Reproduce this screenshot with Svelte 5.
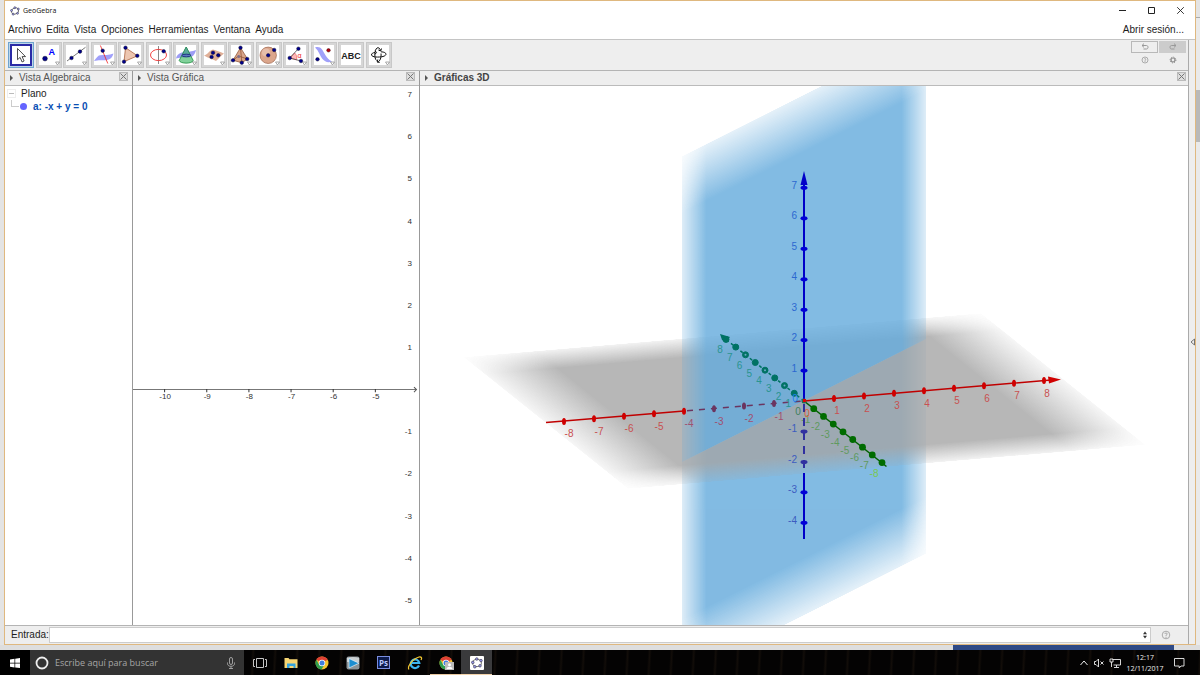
<script>
  const menus = ['Archivo', 'Edita', 'Vista', 'Opciones', 'Herramientas', 'Ventana', 'Ayuda'];
  const tools = ['Mueve', 'Punto', 'Recta', 'Perpendicular', 'Polígono', 'Circunferencia', 'Intersección', 'Plano',
    'Pirámide', 'Esfera', 'Ángulo', 'Simetría', 'Texto', 'Rota vista'];
  const apps = ['Vista de tareas', 'Explorador', 'Chrome', 'Reproductor', 'Photoshop', 'Explorer', 'Chrome perfil', 'GeoGebra'];

  let active = $state('Mueve');
  let command = $state('');
  let search = $state('');

  const range = (a, b) => Array.from({ length: b - a + 1 }, (_, i) => a + i);

  // 2D view
  const xTicks = range(-10, -5).map((n) => ({ n, x: 586 + 42 * n }));
  const yTicks = range(-5, 7).filter((n) => n !== 0).map((n) => ({ n, y: 389 - 42 * n }));

  // 3D view, parallel projection around the origin
  const O = { x: 804, y: 401 };
  const at = (n, dx, dy) => ({ n, x: O.x + dx * n, y: O.y + dy * n });
  const xAxis = range(-8, 8).filter((n) => n !== 0).map((n) => at(n, 30, -2.55));
  const yAxis = range(-8, 8).filter((n) => n !== 0).map((n) => at(n, -9.75, -7.7));
  const zAxis = range(-4, 7).filter((n) => n !== 0).map((n) => at(n, 0, -30.45));

  // edge fades of the planes: direction, width of the fade, opacity left at the edge
  const fades = [
    { id: 'blueU', x2: 1, y2: 0, w: 0.1, edge: 0.26 },
    { id: 'blueV', x2: 0, y2: 1, w: 0.11, edge: 0.2 },
    { id: 'greyU', x2: 1, y2: 0, w: 0.14, edge: 0.12 },
    { id: 'greyV', x2: 0, y2: 1, w: 0.13, edge: 0.16 }
  ];
</script>

{#snippet logo(size)}
  <svg width={size} height={size} viewBox="0 0 12 12">
    <ellipse cx="6" cy="6" rx="4.4" ry="3.6" transform="rotate(-20 6 6)" fill="none" stroke="#666" />
    {#each [[1.8, 5.4], [5.8, 2], [10, 3.6], [9, 8.8], [3.8, 9.8]] as [x, y]}
      <circle cx={x} cy={y} r="1.2" fill="#9a9aee" stroke="#334" stroke-width=".6" />
    {/each}
  </svg>
{/snippet}

{#snippet dots(list)}
  {#each list as [x, y]}<circle cx={x} cy={y} r="1.8" fill="#00008c" stroke="#001" stroke-width=".4" />{/each}
{/snippet}

{#snippet toolIcon(name)}
  <svg width="22" height="22" viewBox="0 0 22 22">
    {#if name === 'Mueve'}
      <path d="M7.5 4.5v11.2l2.6-2.3 2 4.6 2-1-2-4.4h3.4z" fill="#fff" stroke="#222" stroke-width=".8" />
    {:else if name === 'Punto'}
      <circle cx="7" cy="14.6" r="2.4" fill="#00008c" stroke="#001" stroke-width=".4" />
      <text x="10.5" y="11" font-size="9" font-weight="bold" fill="#00f">A</text>
    {:else if name === 'Recta'}
      <path d="M2 17 20.5 3.3" stroke="#555" stroke-width=".8" />
      {@render dots([[6.5, 14], [15, 7.6]])}
    {:else if name === 'Perpendicular'}
      <path d="M1 17c2-3 4-5.500 6-5.800 4-.5 9 .3 13.500-1.700-1 3.500-3 6-6.500 6.500-4 .5-9-.5-13 1z" fill="#a0a0fa" />
      <path d="m7.400 1.500 7.400 18" stroke="#f02020" stroke-width=".8" />
      {@render dots([[9.700, 6.700]])}
    {:else if name === 'Polígono'}
      <path d="M5.500 3.700 17.500 11.800 4 17.700z" fill="#edc6b0" stroke="#a0522d" stroke-width=".7" />
      {@render dots([[5.500, 3.700], [17.300, 11.800], [4, 17.700]])}
    {:else if name === 'Circunferencia'}
      <path d="M10.500 2v18" stroke="#888" />
      <ellipse cx="10.500" cy="11" rx="8" ry="5.600" fill="none" stroke="#f03030" stroke-width=".9" />
      <path d="M10.500 9v5" stroke="#888" />
      {@render dots([[15.700, 7.300]])}
    {:else if name === 'Intersección'}
      <path d="M1 14.500c1-4 4-6 8-6.500s8 0 12-2c-1 5-4 7.500-8 8s-8-1-12 .5z" fill="#9c9cf5" />
      <path d="M11.200 3 4.200 16.500c1 3.500 13 3.500 14 0z" fill="#6cc98a" fill-opacity=".85" stroke="#178a3a" stroke-width=".8" />
      <path d="M11.200 3 7.500 10.500h7.500z" fill="#58a89a" stroke="#208050" stroke-width=".5" />
      <ellipse cx="11.300" cy="11.500" rx="4.500" ry="1.300" fill="#5a7ac0" stroke="#1a2a80" stroke-width=".9" />
    {:else if name === 'Plano'}
      <path d="M1 11.500c4-1 5-5 9-6 3 1 7 2 11 4-3 2-5 5-8 7.500-3-2-8-3-12-5.500z" fill="#e0b098" />
      {@render dots([[10, 8.700], [15.300, 11.300], [8.600, 13]])}
    {:else if name === 'Pirámide'}
      <path d="M10.500 3.700 3 16.300l8.800 2.400L17.500 15z" fill="#d9a58a" stroke="#8a4a2a" stroke-width=".7" />
      <path d="m10.500 3.700 1.300 15M3 16.300 8.500 12l9 3" fill="none" stroke="#8a4a2a" stroke-width=".7" />
      {@render dots([[10.500, 3.700], [3, 16.300], [11.800, 18.700], [17.200, 15]])}
      <circle cx="8.700" cy="12.500" r="1.500" fill="#80708c" />
    {:else if name === 'Esfera'}
      <circle cx="10.200" cy="11.300" r="8.200" fill="#dba68c" stroke="#9c6248" stroke-width=".7" />
      <circle cx="8" cy="8.500" r="4" fill="#edc9b6" opacity=".7" />
      {@render dots([[10.200, 11.300], [16.200, 6]])}
    {:else if name === 'Ángulo'}
      <path d="m4.700 14 5-5c2 2 2.500 4.500 1.800 6.800z" fill="#ffb8b8" stroke="#e33" stroke-width=".5" />
      <path d="M13.400 4.700 4.700 14 16 17" fill="none" stroke="#444" stroke-width=".8" />
      <text x="12.500" y="13.500" font-size="7" fill="#e22">α</text>
      {@render dots([[4.700, 14], [13.400, 4.700], [16, 17]])}
    {:else if name === 'Simetría'}
      <path d="M2 3.500c3-1 5-.5 7 2s4 9 10 12c-4 1.500-7 .5-9.500-2.500S6 7 2 3.500z" fill="#a0a0fa" />
      <circle cx="15.500" cy="6.300" r="1.800" fill="#b00010" stroke="#300" stroke-width=".4" />
      {@render dots([[4.500, 15.300]])}
    {:else if name === 'Texto'}
      <text x="11" y="14.500" font-size="9" font-weight="bold" text-anchor="middle" fill="#222">ABC</text>
    {:else}
      <path d="M8.500 16.500c-2.500-2-2-11 .5-12.500 1.500-1 3 .5 3.500 2.500M13 9.500c.5 4-1 8-3.500 8.500M13 7.800c6 .2 6.500 3.500 2 4.700-4.500 1-11 .8-11.500-1.500C3.300 9.500 5 8.700 7 8.500M13.500 4.500l-.8 2.500-2.300-1M7 6.800l1.500 1.600-1.500 2M9.800 15.500l-.6 2.500 2.500.4" fill="none" stroke="#111" />
    {/if}
    {#if name !== 'Mueve' && name !== 'Texto'}
      <path d="M17.500 18h4l-2 3z" fill="#fff" stroke="#888" stroke-width=".7" />
    {/if}
  </svg>
{/snippet}

{#snippet chrome()}
  <circle cx="8" cy="8" r="6.500" fill="#f4c430" />
  <path d="M8 8 2.400 4.700A6.500 6.500 0 0 1 13.600 4.700z" fill="#df4033" />
  <path d="M2.400 4.700A6.500 6.500 0 0 0 7.500 14.500L10.500 9.500 5 9.500z" fill="#2f9e4f" />
  <circle cx="8" cy="8" r="3.200" fill="#fff" />
  <circle cx="8" cy="8" r="2.500" fill="#3f7fe0" />
{/snippet}

{#snippet appIcon(name)}
  <svg width="16" height="16" viewBox="0 0 16 16">
    {#if name === 'Vista de tareas'}
      <path d="M4.500 3.500h7v9h-7zM3 4.500H1.500v7H3M13 4.500h1.500v7H13" fill="none" stroke="#ddd" stroke-width=".9" />
    {:else if name === 'Explorador'}
      <path d="M1.500 3h4l1 1.200h8V13h-13z" fill="#f7d673" />
      <path d="M4 13V8.500h8.500V13h-2v-2h-4v2z" fill="#35a3de" />
    {:else if name === 'Chrome'}
      {@render chrome()}
    {:else if name === 'Reproductor'}
      <rect x="1.500" y="1.500" width="13" height="13" rx="2" fill="#8c9498" />
      <path d="M2 3c4-1.500 8-1.500 12 0v4H2z" fill="#c9cfd2" />
      <path d="m4 3.500 10 4.700L4 13z" fill="#1d8ed0" stroke="#e6f3fa" stroke-width=".7" />
    {:else if name === 'Photoshop'}
      <rect x="1.500" y="1.500" width="12" height="12" fill="#0c1a4a" stroke="#7a8ee0" />
      <text x="7.500" y="10.500" font-size="8" font-weight="bold" text-anchor="middle" fill="#b8c8ff">Ps</text>
    {:else if name === 'Explorer'}
      <path d="M12 10.500A4.300 4.300 0 1 1 12.300 8H4.500" fill="none" stroke="#3cb5f0" stroke-width="2.200" />
      <path d="M2 14.500C0 12 5 4 12 2c3-.5 3 1.500 2 3" fill="none" stroke="#f3c832" stroke-width="1.200" />
    {:else if name === 'Chrome perfil'}
      {@render chrome()}
      <rect x="7" y="7" width="9" height="8" fill="#bbb" />
      <circle cx="11.500" cy="9.800" r="1.500" fill="#fff" />
      <path d="M8.500 14c.5-3 5.500-3 6 0z" fill="#fff" />
    {:else}
      <rect x="1" y="1" width="14" height="14" rx="1" fill="#fff" />
      <g transform="translate(2 2)">
        <ellipse cx="6" cy="6" rx="4.400" ry="3.600" fill="none" stroke="#555" stroke-width=".8" />
        {#each [[1.800, 5.400], [5.800, 2], [10, 3.600], [9, 8.800], [3.800, 9.800]] as [x, y]}
          <circle cx={x} cy={y} r="1.300" fill="#9a9aee" stroke="#334" stroke-width=".6" />
        {/each}
      </g>
    {/if}
  </svg>
{/snippet}

{#snippet close()}
  <button class="close" aria-label="Cerrar vista">
    <svg width="9" height="9" viewBox="0 0 9 9"><path d="m1.500 1.500 6 6m0-6-6 6" stroke="#777" /></svg>
  </button>
{/snippet}

<div class="desktop">
  <div class="behind"><span class="thumb"></span></div>
  <div class="window">
    <header class="title">
      {@render logo(10)}
      <span class="name">GeoGebra</span>
      <div class="controls">
        <button aria-label="Minimizar"><svg width="9" height="9"><path d="M1 4.500h7" stroke="#222" /></svg></button>
        <button aria-label="Maximizar"><svg width="9" height="9"><path d="M1.500 1.500h6v6h-6z" fill="none" stroke="#222" /></svg></button>
        <button aria-label="Cerrar"><svg width="9" height="9"><path d="m1.200 1.200 6.600 6.600m0-6.600L1.200 7.800" stroke="#222" stroke-width=".9" /></svg></button>
      </div>
    </header>

    <nav class="menu">
      {#each menus as m (m)}<button>{m}</button>{/each}
      <button class="login">Abrir sesión...</button>
    </nav>

    <div class="main">
      <div class="work">
        <div class="toolbar">
          <div class="tools">
            {#each tools as t (t)}
              <button class="tool" class:on={active === t} aria-label={t} onclick={() => (active = t)}>{@render toolIcon(t)}</button>
            {/each}
          </div>
          <div class="side">
            <button class="undo" aria-label="Deshace"><svg width="8" height="8"><path d="M1 2.500h4.500C7.500 2.500 7.500 6 5.500 6H2.500M3 .6 1 2.500 3 4.400" fill="none" stroke="#999" /></svg></button>
            <button class="undo redo" aria-label="Rehace"><svg width="8" height="8"><path d="M7 2.500H2.500C.5 2.500.5 6 2.500 6h3M5 .6l2 1.900-2 1.900" fill="none" stroke="#999" /></svg></button>
            <button aria-label="Ayuda"><svg width="8" height="8"><circle cx="4" cy="4" r="3" fill="none" stroke="#999" stroke-width=".8" /><path d="M3 3.200c.3-1 2-.8 2 .2L4 4.300V6" fill="none" stroke="#999" stroke-width=".7" /></svg></button>
            <button aria-label="Preferencias"><svg width="8" height="8"><circle cx="4" cy="4" r="2" fill="none" stroke="#888" stroke-width="1.200" /><circle cx="4" cy="4" r="2.900" fill="none" stroke="#888" stroke-dasharray="1.100 1.180" /></svg></button>
          </div>
        </div>

        <div class="views">
          <section class="pane">
            <div class="head"><i class="arrow"></i><span>Vista Algebraica</span>{@render close()}</div>
            <div class="tree">
              <div class="group"><button class="fold" aria-label="Contraer"></button>Plano</div>
              <div class="item"><span class="branch"></span><span class="ball"></span>a: -x + y = 0</div>
            </div>
          </section>

          <section class="pane">
            <div class="head"><i class="arrow"></i><span>Vista Gráfica</span>{@render close()}</div>
            <svg class="canvas" viewBox="134 86 285 539" preserveAspectRatio="xMaxYMid slice">
              <path d="M133 389.500h283" stroke="#777" />
              <path d="m414 387 2.500 2.500L414 392" fill="none" stroke="#555" />
              {#each xTicks as t (t.n)}
                <path d="M{t.x - 0.5} 389v3" stroke="#333" />
                <text class="small" x={t.x} y="399" text-anchor="middle">{t.n}</text>
              {/each}
              {#each yTicks as t (t.n)}
                <text class="small" x="412" y={t.y + 3} text-anchor="end">{t.n}</text>
              {/each}
            </svg>
          </section>

          <section class="pane">
            <div class="head bold"><i class="arrow"></i><span>Gráficas 3D</span>{@render close()}</div>
            <svg class="canvas" viewBox="420 86 768 539" preserveAspectRatio="xMidYMid slice">
              <defs>
                {#each fades as f (f.id)}
                  <linearGradient id="{f.id}Fade" x2={f.x2} y2={f.y2}>
                    <stop offset="0" stop-color="#fff" stop-opacity={f.edge} />
                    <stop offset={f.w} stop-color="#fff" />
                    <stop offset={1 - f.w} stop-color="#fff" />
                    <stop offset="1" stop-color="#fff" stop-opacity={f.edge} />
                  </linearGradient>
                  <mask id={f.id} maskUnits="userSpaceOnUse" x="0" y="0" width="100" height="100">
                    <rect width="100" height="100" fill="url(#{f.id}Fade)" />
                  </mask>
                {/each}
                <!-- halves of the vertical plane, split where z = 0 -->
                <clipPath id="above"><path d="M680 0h250v337L680 463z" /></clipPath>
                <clipPath id="below"><path d="M680 463 930 337v400H680z" /></clipPath>
              </defs>

              {#snippet plane(name, matrix, fill, opacity)}
                <g transform={matrix} {opacity}>
                  <g mask="url(#{name}U)"><rect width="100" height="100" {fill} mask="url(#{name}V)" /></g>
                </g>
              {/snippet}

              <g clip-path="url(#below)">{@render plane('blue', 'matrix(2.44 -1.23 0 5.21 682 156)', '#63aadc', 0.8)}</g>
              {@render plane('grey', 'matrix(5.18 -.44 1.65 1.32 463 357)', '#a5a5a5', 0.79)}
              <g clip-path="url(#above)">{@render plane('blue', 'matrix(2.44 -1.23 0 5.21 682 156)', '#63aadc', 0.8)}</g>

              <!-- x axis, dashed where the plane hides it -->
              <path d="M546 422.500 684 411M804 401l250-21.200" stroke="#c00000" stroke-width="1.500" />
              <path d="M684 411 804 401" stroke="#6b3560" stroke-width="1.500" stroke-dasharray="6 6" stroke-dashoffset="-3" />
              <path d="m1061 379.500-13-3 1 7z" fill="#d00000" />
              {#each xAxis as t (t.n)}
                <ellipse cx={t.x} cy={t.y} rx="2" ry="3.500" fill={t.n < 0 && t.n > -4 ? '#6b3560' : '#cf0000'} />
                <text x={t.x + (t.n < 0 ? 5 : 3)} y={t.y + 16} text-anchor="middle" fill={t.n < 0 && t.n > -5 ? '#a05070' : '#c85050'}>{t.n}</text>
              {/each}

              <!-- y axis -->
              <path d="M804 401 726 339.500" stroke="#007264" stroke-width="1.500" stroke-dasharray="3 3" />
              <path d="m804 401 82.500 65.500" stroke="#006000" stroke-width="1.500" />
              <path d="m720 334 2 6 4 2 4-5z" fill="#007264" />
              {#each yAxis as t (t.n)}
                <circle cx={t.x} cy={t.y} r={t.n > 0 ? 3 : 3.4} fill={t.n > 0 ? '#007264' : '#006c00'} stroke={t.n > 0 ? '#007264' : 'none'} />
                {#if t.n > 0 && t.n < 7 && t.n % 2 === 0}<circle cx={t.x} cy={t.y} r="1" fill="#69a9c4" />{/if}
                <text x={t.x - (t.n < 0 ? 8 : 6)} y={t.y + 14} text-anchor="middle" fill={t.n > 0 ? '#2a9490' : t.n === -8 ? '#78c850' : '#5f9a5f'}>{t.n}</text>
              {/each}

              <!-- z axis -->
              <path d="M804 401V182M804 473v66" stroke="#0000c8" stroke-width="2" />
              <path d="M804 404v69" stroke="#3030a0" stroke-width="2" stroke-dasharray="8 6" />
              <path d="m804 171-3.500 14h7z" fill="#0000c8" />
              {#each zAxis as t (t.n)}
                <ellipse cx={t.x} cy={t.y} rx="3.500" ry="2" fill={t.n < 0 && t.n > -3 ? '#3030a0' : '#0000d8'} />
                <text x="797" y={t.y + 1} text-anchor="end" fill={t.n < 0 ? '#3c5cc0' : '#2c68d0'}>{t.n}</text>
              {/each}
              <circle cx="804" cy="401" r="2.500" fill="#2a6a50" />
              <rect x="803" y="399" width="3" height="3" fill="#e00000" />
              <text x="795" y="402" text-anchor="middle" fill="#2080f0">0</text>
              <text x="798" y="415" text-anchor="middle" fill="#3f7f5f">0</text>
              <text x="807" y="417" text-anchor="middle" fill="#e06040">0</text>
            </svg>
          </section>
        </div>

        <div class="entry">
          <label for="entrada">Entrada:</label>
          <div class="box">
            <input id="entrada" bind:value={command} />
            <button aria-label="Historial"><svg width="6" height="8"><path d="M1 3.300h4L3 .6zM1 4.700h4L3 7.400z" fill="#333" /></svg></button>
          </div>
          <button class="help" aria-label="Ayuda de entrada"><svg width="10" height="10"><circle cx="5" cy="5" r="3.800" fill="none" stroke="#999" stroke-width=".8" /><path d="M3.700 4c.3-1.500 2.700-1.200 2.600.2L5 5.300v1M5 7v1" fill="none" stroke="#999" stroke-width=".8" /></svg></button>
        </div>
      </div>
      <button class="rail" aria-label="Mostrar apariencias"><svg width="5" height="8"><path d="M4.500 1v6L1 4z" fill="none" stroke="#555" stroke-width=".8" /></svg></button>
    </div>
  </div>

  <div class="gap"><span></span></div>

  <footer class="taskbar">
    <button class="start" aria-label="Inicio"><svg width="10" height="10"><path d="m0 1.500 4.500-.7v4H0zM5.200.7 10 0v4.800H5.200zM0 5.400h4.500v4L0 8.800zM5.200 5.400H10v4.600l-4.800-.6z" fill="#fff" /></svg></button>
    <div class="search">
      <svg width="14" height="14"><circle cx="7" cy="7" r="5.500" fill="none" stroke="#eee" stroke-width="1.800" /></svg>
      <input aria-label="Buscar" placeholder="Escribe aquí para buscar" bind:value={search} />
      <svg width="10" height="14"><rect x="3.500" y="1.500" width="3" height="7" rx="1.500" fill="none" stroke="#aaa" stroke-width=".9" /><path d="M1.500 6.500v1.200c0 3.500 7 3.500 7 0V6.500M5 10.500v2M3 12.500h4" fill="none" stroke="#aaa" stroke-width=".9" /></svg>
    </div>
    {#each apps as a (a)}
      <button class="app" class:open={a === 'Chrome perfil'} class:current={a === 'GeoGebra'} aria-label={a}>{@render appIcon(a)}</button>
    {/each}
    <div class="tray">
      <svg width="10" height="10"><path d="m1.500 7 3.500-4 3.500 4" fill="none" stroke="#eee" /></svg>
      <svg width="12" height="10"><path d="M1.500 3.500h1.500L5.500 1v8L3 6.500H1.500zM7.500 3.500l3 3m0-3-3 3" fill="none" stroke="#eee" stroke-width=".9" /></svg>
      <svg width="12" height="10"><path d="M3.500 1.500h8v5.500h-7M7.500 7v2M5 9.500h5M1 1h3v3H1zM2.500 4v5" fill="none" stroke="#eee" stroke-width=".9" /></svg>
      <div class="clock"><span>12:17</span><span>12/11/2017</span></div>
      <svg width="12" height="12"><path d="M1.500 1.500h9.500v7.500H8L6.200 11V9H1.500z" fill="none" stroke="#eee" stroke-width=".9" /></svg>
    </div>
  </footer>
</div>

<style>
  :global(body) { margin: 0; }
  .desktop { position: relative; min-height: 100vh; display: flex; flex-direction: column; background: #e4e4e4;
    font: 10px/12px "Liberation Sans", Arial, sans-serif; color: #1c1c1c; }
  button { border: 0; padding: 0; margin: 0; background: none; font: inherit; color: inherit; display: flex;
    align-items: center; justify-content: center; }
  svg { display: block; flex: none; }
  input { border: 0; outline: 0; padding: 0; font: inherit; background: none; min-width: 0; flex: 1; }

  /* the sliver of the browser that shows past the right edge */
  .behind { position: absolute; top: 17px; right: 0; bottom: 30px; width: 4px; border-top: 1px solid #aaa; background: #eaeaea; }
  .thumb { position: absolute; top: 72px; right: 0; width: 4px; height: 52px; background: #b9b9b9; }

  .window { position: relative; flex: 1; display: flex; flex-direction: column; margin: 0 4px; border: 1px solid #dfb87f; background: #fff; }
  .title { display: flex; align-items: center; height: 19px; padding-left: 5px; }
  .name { margin-left: 3px; font: 7px/12px "Open Sans", "Noto Sans", sans-serif; color: #111; }
  .controls { display: flex; margin-left: auto; }
  .controls button { width: 29px; height: 19px; }
  .menu { display: flex; align-items: center; gap: 5px; height: 19px; padding: 0 11px 0 3px; }
  .login { margin-left: auto; }

  .main { flex: 1; display: flex; border-top: 1px solid #c4c4c4; }
  .work { flex: 1; min-width: 0; display: flex; flex-direction: column; background: #eee; }
  .rail { width: 7px; background: #eee; border-left: 1px solid #aaa; }

  .toolbar { display: flex; align-items: center; justify-content: space-between; height: 30px; border-bottom: 1px solid #b4b4b4; padding: 0 2px 0 3px; }
  .tools { display: flex; justify-content: space-between; width: 384px; }
  .tool { box-sizing: border-box; width: 26px; height: 26px; border: 1px solid #c8c8c8; background: #d6d6d6; overflow: hidden; }
  .tool svg { background: #fff; box-shadow: inset 0 0 0 1px #d6d6d6; }
  .tool.on { border-color: #6fa4cf; background: #bcd6ea; }
  .tool.on svg { box-shadow: inset 0 0 0 2px #2b2ba6; }
  .side { display: grid; grid-template: 12px 12px / 27px 27px; gap: 1px; align-self: flex-start; padding-top: 1px; }
  .side .undo { box-sizing: border-box; border: 1px solid #b8b8b8; }
  .side .redo { background: #ccc; border-color: #ccc; }

  .views { flex: 1; display: grid; grid-template-columns: 127px 286px 1fr; gap: 1px; background: #999; border-bottom: 1px solid #b4b4b4; }
  .pane { display: flex; flex-direction: column; min-width: 0; background: #fff; }
  .head { display: flex; align-items: center; height: 14px; padding: 0 4px 0 5px; background: #eee; border-bottom: 1px solid #bbb; color: #555; }
  .head.bold { padding-right: 2px; font-weight: bold; color: #444; }
  .arrow { width: 0; height: 0; margin-right: 6px; border-left: 3px solid #555; border-top: 3px solid transparent; border-bottom: 3px solid transparent; }
  .close { width: 9px; height: 9px; margin: 0 0 3px auto; background: #ddd; outline: 1px solid #bbb; outline-offset: -1px; }
  .canvas { flex: 1 1 0; width: 100%; min-height: 0; }
  .small { font-size: 8px; fill: #333; }

  .tree { padding-top: 1px; line-height: 13px; }
  .group { display: flex; align-items: center; padding-left: 2px; }
  .fold { box-sizing: border-box; width: 9px; height: 9px; margin-right: 5px; border: 1px solid #eee; }
  .fold::before { content: ''; width: 5px; height: 1px; background: #bbb; }
  .item { display: flex; align-items: center; font-weight: bold; color: #0a4fb4; }
  .branch { width: 7px; height: 6px; margin: 0 1px 6px 6px; border-left: 1px solid #ccc; border-bottom: 1px solid #ccc; }
  .ball { width: 7px; height: 7px; margin-right: 6px; border-radius: 50%; background: #6464ff; }

  .entry { display: flex; align-items: center; height: 18px; padding-left: 6px; }
  .box { flex: 1; display: flex; align-items: center; box-sizing: border-box; height: 16px; padding: 0 2px; border: 1px solid #ccc; background: #fff; }
  .help { width: 30px; margin-right: 7px; }

  .gap { height: 5px; background: #dedede; }
  .gap span { display: block; height: 5px; margin: 0 26px 0 auto; width: 221px; background: #2f4a86; }

  .taskbar { display: flex; height: 25px; background: #040303 repeating-linear-gradient(93deg, transparent 0 9px, #120d09 11px, transparent 13px 22px);
    font-family: "Open Sans", "Noto Sans", sans-serif; color: #eee; }
  .start { width: 30px; background: #000; }
  .search { box-sizing: border-box; display: flex; align-items: center; width: 214px; padding: 0 8px 0 5px; background: #333; }
  .search input { margin-left: 6px; font-size: 9px; color: #ddd; }
  .search input::placeholder { color: #a6a6a6; opacity: 1; }
  .app { box-sizing: border-box; width: 31px; }
  .open { box-shadow: inset 0 -1px #e8c8a0; }
  .current { background: #3a3a3c; box-shadow: inset 0 -1px #f3d3ab; }
  .tray { display: flex; align-items: center; margin-left: auto; padding-right: 15px; gap: 4px; }
  .clock { display: flex; flex-direction: column; align-items: center; width: 40px; margin-right: 4px; font-size: 7px; line-height: 11px; }
</style>
